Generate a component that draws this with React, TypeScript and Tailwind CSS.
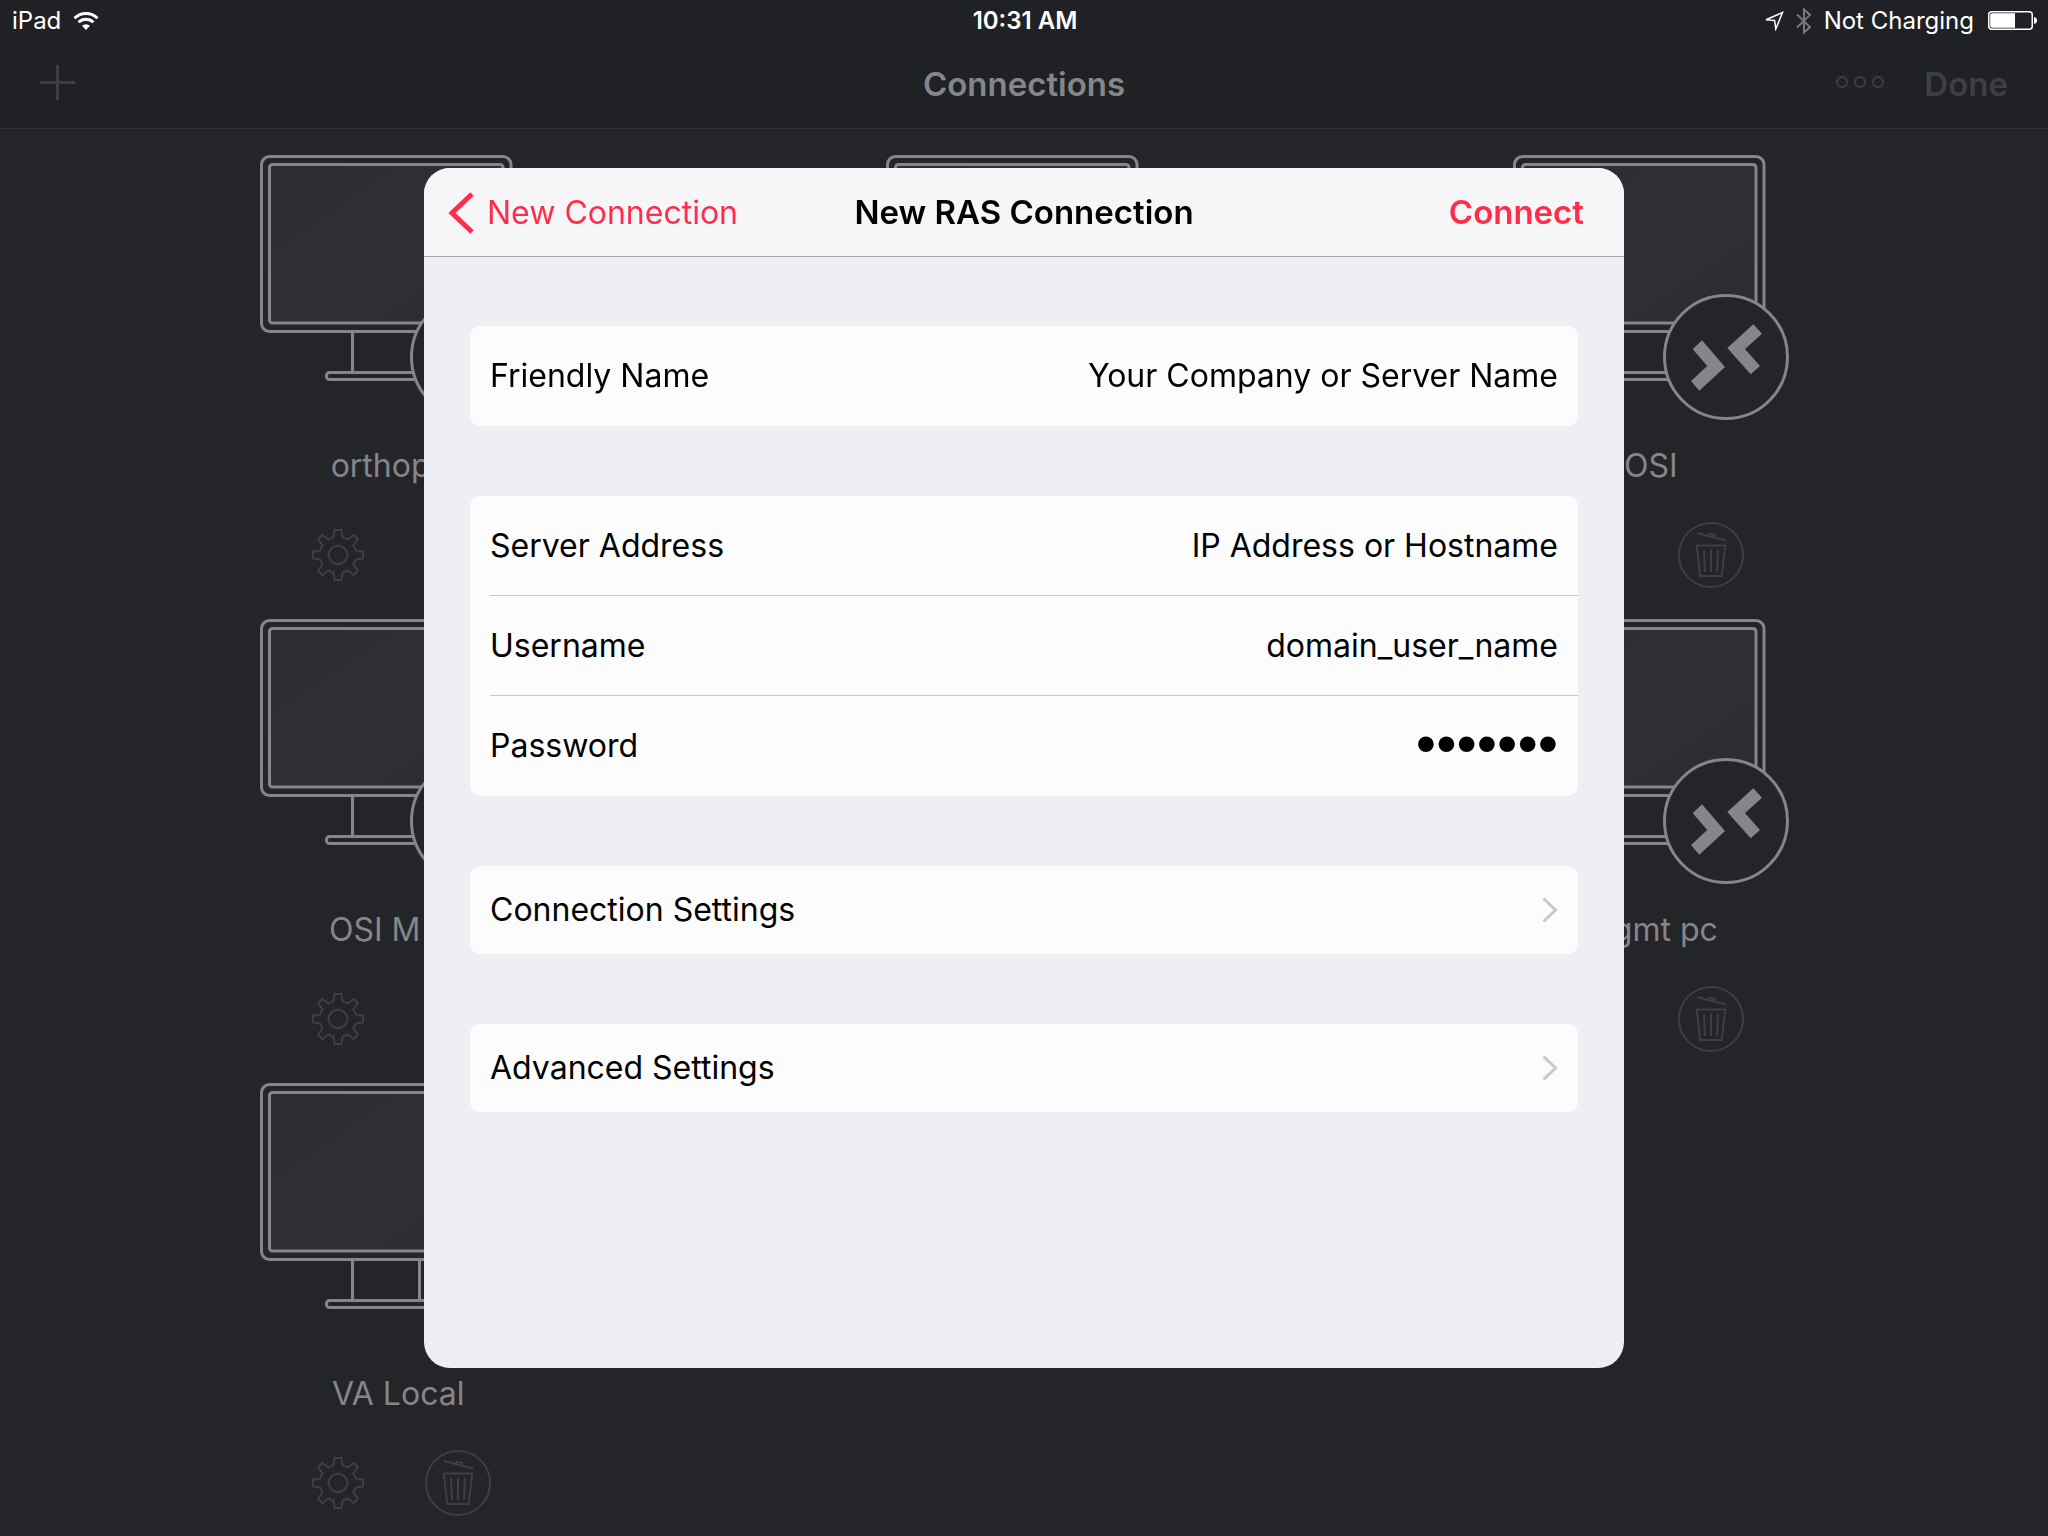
import type { ReactNode } from "react";

type Connection = {
    id: number
    name?: string
    local?: boolean
}

const connections: Connection[] = [
    { id: 1, name: "orthopcs" },
    { id: 2 },
    { id: 3, name: "OSI" },
    { id: 4, name: "OSI M pc" },
    { id: 5 },
    { id: 6, name: "Mgmt pc" },
    { id: 7, name: "VA Local", local: true },
]

const WifiIcon = () => (
    <svg width="26" height="20" viewBox="0 0 26 20" fill="none" stroke="#fff" strokeWidth="3">
        <path d="M1.500 7.200a16.400 16.400 0 0 1 23 0" />
        <path d="M5.600 11.300a10.600 10.600 0 0 1 14.800 0" />
        <path d="M13 19l-4-4.200a5.800 5.800 0 0 1 8 0z" fill="#fff" stroke="none" />
    </svg>
)

const LocationIcon = () => (
    <svg width="20" height="20" viewBox="0 0 20 20" fill="none" stroke="#fff" strokeWidth="1.5">
        <path d="M18.500 1.500L2 8.800l8.600.6 1.200 8.600z" />
    </svg>
)

const BluetoothIcon = () => (
    <svg width="16" height="28" viewBox="0 0 16 28" fill="none" stroke="#77787b" strokeWidth="2">
        <path d="M1 7.500l13 12.600L8 25.500V2.500l6 5.400L1 20.500" />
    </svg>
)

const BatteryIcon = () => (
    <svg width="50" height="20" viewBox="0 0 50 20">
        <rect x="0.75" y="0.75" width="43.5" height="17.5" rx="3" fill="none" stroke="#fff" strokeWidth="1.5" />
        <path d="M4 2.200h23v14.600H4a1.800 1.800 0 0 1-1.800-1.800V4A1.800 1.800 0 0 1 4 2.200z" fill="#fff" />
        <path d="M46 6c2 .4 3 1.700 3 3.500s-1 3.100-3 3.500z" fill="#fff" />
    </svg>
)

const GearIcon = () => (
    <svg width="52" height="52" viewBox="-26 -26 52 52" fill="none" stroke="currentColor" strokeWidth="2">
        <path d="M-3.300-25H3.300L4.600-17.600Q7.200-17 9.600-15.400L15.700-20L20-15.700L15.400-9.600Q17-7.200 17.600-4.600L25-3.300V3.300L17.600 4.600Q17 7.200 15.400 9.600L20 15.700L15.700 20L9.600 15.400Q7.200 17 4.600 17.600L3.300 25H-3.300L-4.600 17.600Q-7.200 17-9.600 15.400L-15.700 20L-20 15.700L-15.400 9.600Q-17 7.200-17.600 4.600L-25 3.300V-3.300L-17.600-4.600Q-17-7.200-15.400-9.600L-20-15.700L-15.700-20L-9.600-15.400Q-7.200-17-4.600-17.600Z" />
        <circle r="9.300" />
    </svg>
)

const TrashIcon = () => (
    <svg width="66" height="66" viewBox="-33 -33 66 66" fill="none" stroke="currentColor" strokeWidth="2">
        <circle r="32" />
        <path d="M-14-22L15-14.500M-2-20l1-1.200L4-20.200l-.4 2.200" />
        <path d="M-14.300-9.500H14.300L10.700 21H-10.700z" />
        <path d="M-7-5L-6 17M0-5V17M7-5L6 17" />
    </svg>
)

const MonitorImage = ({ local }: { local?: boolean }) => (
    <svg width="276" height="265" viewBox="0 0 276 265" fill="none" stroke="#858689" strokeWidth="3">
        <defs>
            <linearGradient id="screen" x1="0" y1="0" x2="1" y2="1">
                <stop offset="0" stopColor="#2b2c31" />
                <stop offset="0.5" stopColor="#2f3034" />
                <stop offset="1" stopColor="#2b2c31" />
            </linearGradient>
        </defs>
        <rect x="1.5" y="1.5" width="249.500" height="175" rx="8" />
        <rect x="9.5" y="9.5" width="233.500" height="158.500" rx="3" fill="url(#screen)" />
        <path d="M92.500 178v38M159.500 178v38" />
        <rect x="66.500" y="217.500" width="120" height="7" rx="3" />
        {!local && (
            <g transform="translate(213 202)">
                <circle r="61.500" fill="#242529" />
                <g fill="#858689" stroke="none">
                    <path d="M-24-16.700L-1 10L-26.700 33.700L-35 24L-18.700 9L-33.300-7.700Z" />
                    <path d="M27.300-32.700L36-23.300L19-8L34 9L24.700 17.300L1.300-9Z" />
                </g>
            </g>
        )}
    </svg>
)

const ConnectionTile = ({ name, local }: Connection) => (
    <li className="flex flex-col items-center">
        <MonitorImage local={local} />
        <p className="mt-[26px] h-10 text-[32px] leading-10 text-[#858689]">{name}</p>
        <div className="mt-9 flex gap-[54px] text-[#3e3f43]">
            <button className="flex size-[66px] items-center justify-center" aria-label="Edit"><GearIcon /></button>
            <button className="flex size-[66px] items-center justify-center" aria-label="Delete"><TrashIcon /></button>
        </div>
    </li>
)

const StatusBar = () => (
    <div className="grid h-10 grid-cols-3 items-center pt-0.5 pr-[10px] pl-3 text-2xl text-white">
        <div className="flex items-center gap-3">
            <span>iPad</span>
            <WifiIcon />
        </div>
        <p className="text-center font-semibold">10:31 AM</p>
        <div className="flex items-center justify-end gap-[14px]">
            <div className="flex items-center gap-3">
                <LocationIcon />
                <BluetoothIcon />
                <span>Not Charging</span>
            </div>
            <BatteryIcon />
        </div>
    </div>
)

const NavBar = () => (
    <nav className="grid h-22 grid-cols-3 items-center px-10 pt-0.5 text-[33px] font-semibold text-[#3e3f43]">
        <button className="justify-self-start pb-1.5" aria-label="Add">
            <svg width="35" height="35" viewBox="0 0 35 35" stroke="currentColor" strokeWidth="3">
                <path d="M17.500 0v35M0 17.500h35" />
            </svg>
        </button>
        <h1 className="text-center text-[#858689]">Connections</h1>
        <div className="flex items-center justify-end gap-10">
            <button className="pb-1.5" aria-label="More">
                <svg width="48" height="12" viewBox="0 0 48 12" fill="none" stroke="currentColor" strokeWidth="2">
                    <circle cx="6" cy="6" r="5" />
                    <circle cx="24" cy="6" r="5" />
                    <circle cx="42" cy="6" r="5" />
                </svg>
            </button>
            <button>Done</button>
        </div>
    </nav>
)

const Group = ({ children }: { children: ReactNode }) => (
    <div className="divide-y divide-[#c8c7cc] rounded-[10px] bg-[#fcfcfc] pl-5">{children}</div>
)

const Field = ({ id, label, value }: { id: string, label: string, value: string }) => (
    <div className="flex h-[100px] items-center pr-5">
        <label htmlFor={id}>{label}</label>
        <input id={id} type="text" defaultValue={value} className="min-w-0 flex-1 bg-transparent text-right outline-none" />
    </div>
)

// larger type so the bullets come out as heavy dots
const PasswordField = () => (
    <div className="flex h-[100px] items-center pr-5">
        <label htmlFor="password">Password</label>
        <input id="password" type="password" defaultValue="1234567" className="h-20 min-w-0 flex-1 bg-transparent pb-2 text-right font-['Liberation_Sans',sans-serif] text-[58px] outline-none" />
    </div>
)

const SettingsLink = ({ label }: { label: string }) => (
    <button className="flex h-[88px] w-full items-center justify-between pr-5 text-left">
        {label}
        <svg width="16" height="26" viewBox="0 0 16 26" fill="none" stroke="#c7c7cc" strokeWidth="3">
            <path d="M1.500 1.500L13.500 13L1.500 24.500" />
        </svg>
    </button>
)

const NewConnectionDialog = () => (
    <div role="dialog" aria-labelledby="dialog-title" className="flex aspect-square w-full max-w-[1200px] flex-col overflow-hidden rounded-[26px] bg-[#efeef4] text-[32px] text-black">
        <header className="grid h-[89px] grid-cols-3 items-center border-b border-[#a7a7ab] bg-[#f6f6f8] px-6 pt-0.5">
            <button className="flex items-center gap-3 text-[#ff2d4b]">
                <svg width="27" height="42" viewBox="0 0 27 42" fill="none" stroke="currentColor" strokeWidth="5">
                    <path d="M24 2L4 21L24 40" />
                </svg>
                New Connection
            </button>
            <h2 id="dialog-title" className="text-center text-[33px] font-semibold whitespace-nowrap">New RAS Connection</h2>
            <div className="flex justify-end pr-4">
                <button className="text-[33px] font-semibold text-[#ff2d4b]">Connect</button>
            </div>
        </header>
        <form className="flex flex-col gap-[70px] px-[46px] pt-[69px]">
            <Group>
                <Field id="friendly-name" label="Friendly Name" value="Your Company or Server Name" />
            </Group>
            <Group>
                <Field id="server-address" label="Server Address" value="IP Address or Hostname" />
                <Field id="username" label="Username" value="domain_user_name" />
                <PasswordField />
            </Group>
            <Group>
                <SettingsLink label="Connection Settings" />
            </Group>
            <Group>
                <SettingsLink label="Advanced Settings" />
            </Group>
        </form>
    </div>
)

const App = () => {
    return (
        <div className="min-h-screen bg-[#242529] font-['Inter',sans-serif]">
            <header className="border-b border-[#34353a] bg-[#202125]">
                <StatusBar />
                <NavBar />
            </header>
            <ul className="grid grid-cols-3 gap-y-[31px] pt-[26px] pr-[84px] pl-[85px]">
                {connections.map((connection) => (
                    <ConnectionTile key={connection.id} {...connection} />
                ))}
            </ul>
            <div className="fixed inset-0 flex items-center justify-center">
                <NewConnectionDialog />
            </div>
        </div>
    )
}

export default App
